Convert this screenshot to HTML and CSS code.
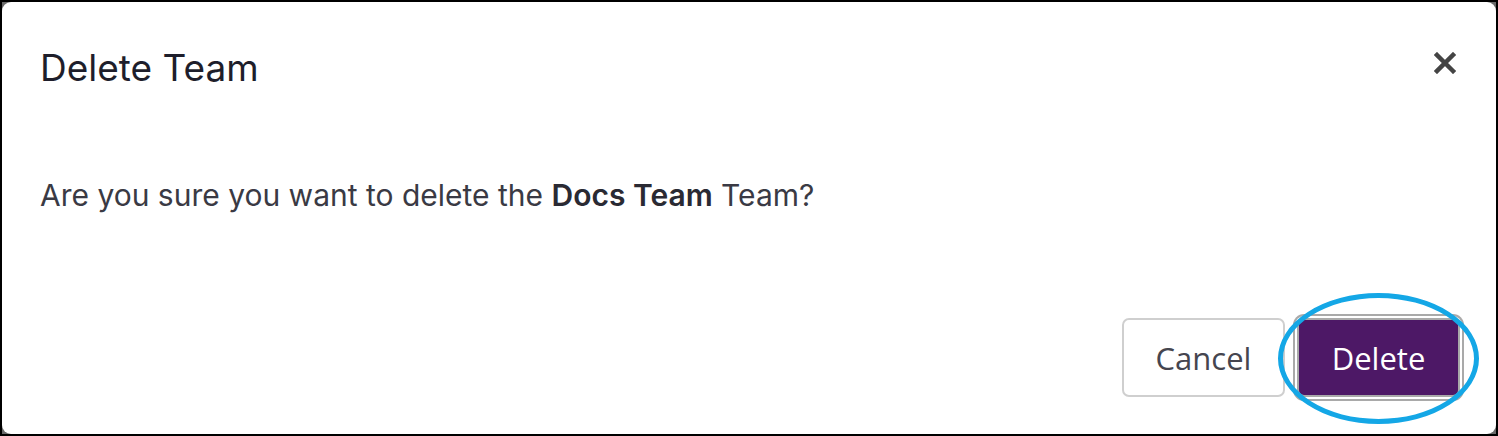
FILE: index.html
```html
<!DOCTYPE html>
<html lang="en">

<head>
    <meta charset="UTF-8">
    <meta name="viewport" content="width=device-width, initial-scale=1.0">
    <link rel="stylesheet" href="styles.css">
</head>
<body>
    <div class="modal">
        <div class="modal-header">
            <h1>Delete Team</h1>
            <button class="close" aria-label="Close">
                <svg width="22" height="22" viewBox="0 0 22 22">
                    <path d="M3 3 L19 19 M19 3 L3 19" stroke="#444" stroke-width="4.5" stroke-linecap="square"/>
                </svg>
            </button>
        </div>
        <div class="modal-body">
            <p>Are you sure you want to delete the <strong>Docs Team</strong> Team?</p>
        </div>
        <div class="modal-footer">
            <button class="btn btn-cancel">Cancel</button>
            <div class="highlight">
                <button class="btn btn-delete">Delete</button>
                <span class="ring"></span>
            </div>
        </div>
    </div>
</body>

</html>
```

FILE: styles.css
```css
html, body {
    height: 100%;
}

body {
    margin: 0;
    box-sizing: border-box;
    border: 2px solid #000;
    background-color: #6a6a6a;
    font-family: Inter, 'Noto Sans', sans-serif;
}

.modal {
    height: 100%;
    background-color: #fff;
    border-radius: 9px;
    display: flex;
    flex-direction: column;
}

.modal-header {
    display: flex;
    justify-content: space-between;
    align-items: flex-start;
    padding: 44px 38px 0 38px;
}

.modal-header h1 {
    margin: 0;
    font-size: 37px;
    font-weight: 400;
    line-height: 1.2;
    color: #1e1e2b;
}

.close {
    background: none;
    border: none;
    padding: 0;
    margin-top: 6px;
    margin-right: 2px;
    cursor: pointer;
}

.modal-body {
    padding: 0 38px;
}

.modal-body p {
    margin: 87px 0 0 0;
    font-size: 30px;
    line-height: 1.2;
    color: #3a3a44;
}

.modal-body strong {
    font-weight: 600;
    color: #2a2a33;
}

.modal-footer {
    margin-top: auto;
    display: flex;
    justify-content: flex-end;
    align-items: center;
    gap: 12px;
    padding: 0 36px 37px 0;
}

.btn {
    font-family: 'Open Sans', sans-serif;
    font-size: 31px;
    height: 79px;
    width: 163px;
    border-radius: 7px;
    cursor: pointer;
}

.btn-cancel {
    background-color: #fff;
    border: 2px solid #cfcfcf;
    color: #45454f;
}

.btn-delete {
    background-color: #4d1866;
    border: 2px solid #a9a9a9;
    color: #fff;
    box-shadow: 0 0 0 2px #fff, 0 0 0 4px #a9a9a9;
}

.highlight {
    position: relative;
    display: flex;
}

.ring {
    position: absolute;
    left: -19px;
    top: -25px;
    width: 191px;
    height: 121px;
    border: 5px solid #14a7e6;
    border-radius: 50%;
    pointer-events: none;
}
```
